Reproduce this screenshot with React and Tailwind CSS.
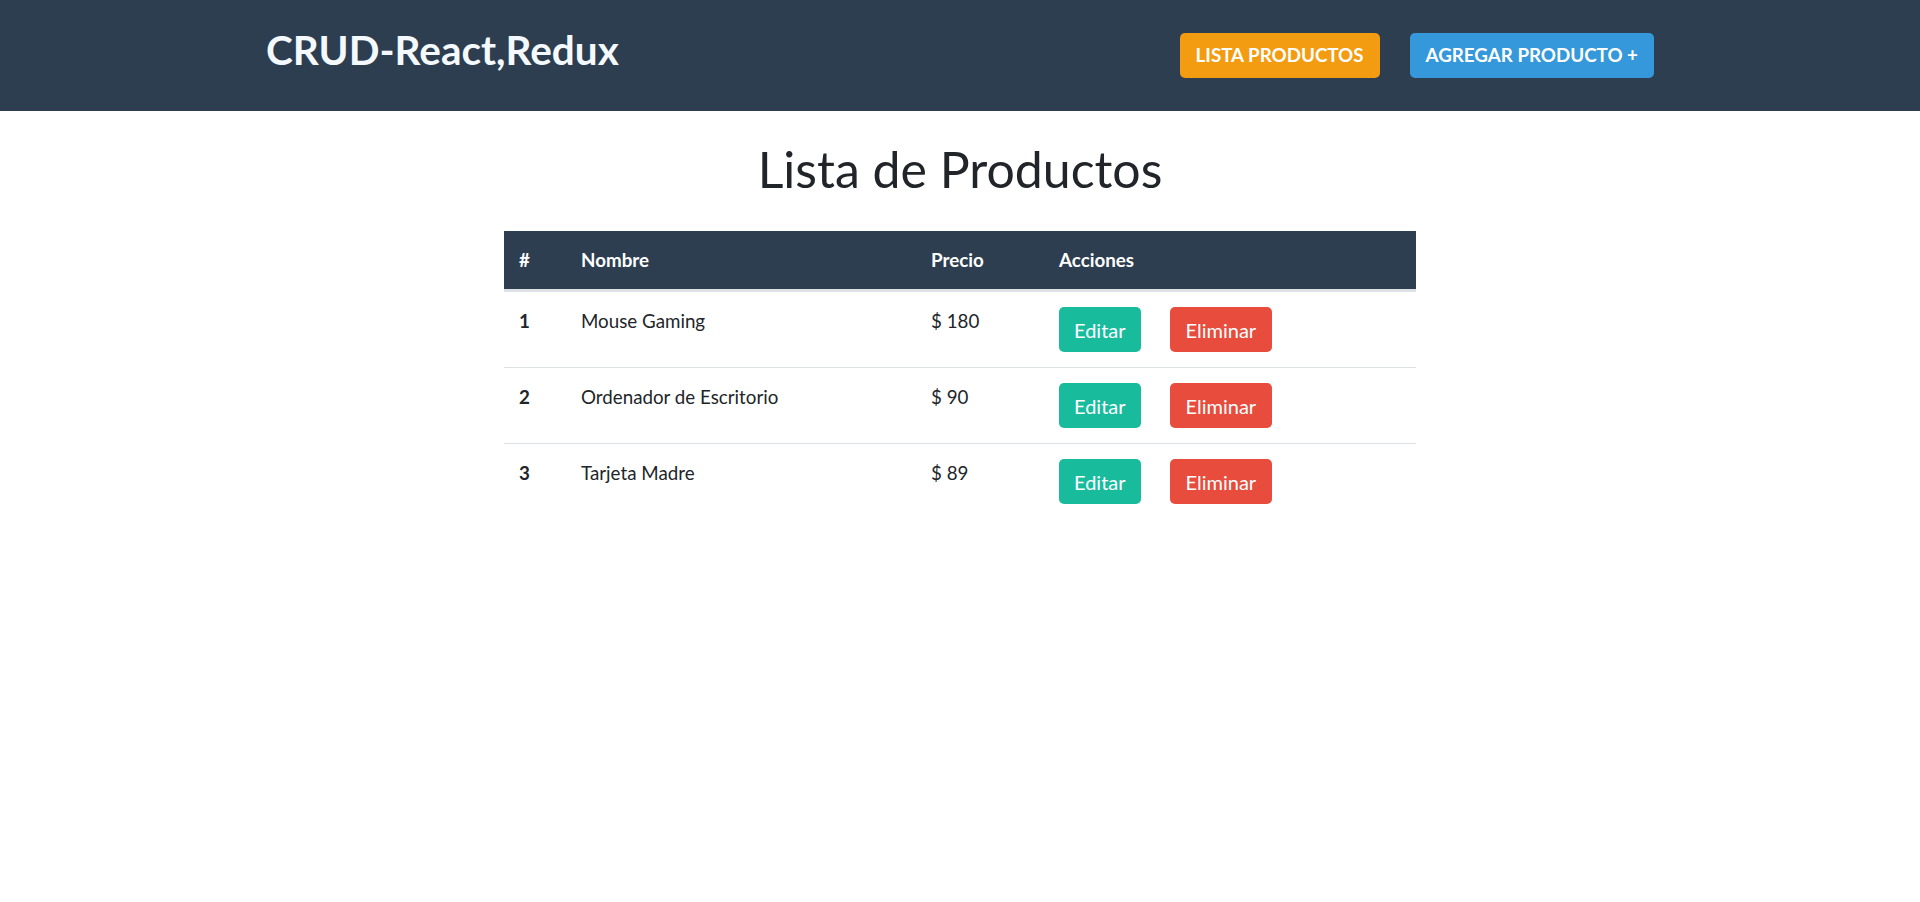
import React from "react";

const productos = [
  { id: 1, nombre: "Mouse Gaming", precio: 180 },
  { id: 2, nombre: "Ordenador de Escritorio", precio: 90 },
  { id: 3, nombre: "Tarjeta Madre", precio: 89 },
];

function Header() {
  return (
    <header className="bg-[#2c3e50] h-[111px] px-[266px] flex items-center justify-between">
      <h1 className="text-[40.5px] font-bold text-[#f4f9ff] leading-none mb-[11px]">CRUD-React,Redux</h1>
      <nav className="flex items-center gap-[30px]">
        <a className="h-[45px] px-[16px] flex items-center rounded-[5px] bg-[#f39c12] text-white font-bold uppercase text-[18.75px]">
          Lista Productos
        </a>
        <a className="h-[45px] px-[16px] flex items-center rounded-[5px] bg-[#3498db] text-white font-bold uppercase text-[18.75px]">
          Agregar Producto +
        </a>
      </nav>
    </header>
  );
}

function Fila({ producto }) {
  return (
    <div className="grid grid-cols-[62px_350px_128px_1fr] border-t border-[#dee2e6] first:border-t-0">
      <div className="p-[15px] leading-[28px] font-bold">{producto.id}</div>
      <div className="p-[15px] leading-[28px]">{producto.nombre}</div>
      <div className="p-[15px] leading-[28px]">$ {producto.precio}</div>
      <div className="p-[15px] flex gap-[29px]">
        <button className="h-[45px] px-[15px] rounded-[5px] bg-[#18bc9c] text-white text-[20px]">Editar</button>
        <button className="h-[45px] px-[16px] rounded-[5px] bg-[#e74c3c] text-white text-[20px]">Eliminar</button>
      </div>
    </div>
  );
}

export default function App() {
  return (
    <div className="min-h-screen bg-white text-[#212529] text-[18.75px] font-['Lato','Liberation_Sans',sans-serif]">
      <Header />
      <main className="w-[912px] mx-auto">
        <h2 className="text-center text-[50px] font-normal leading-[60px] mt-[28px] mb-[32px]">Lista de Productos</h2>
        <div>
          <div className="grid grid-cols-[62px_350px_128px_1fr] bg-[#2c3e50] text-white font-bold border-b-2 border-[#dee2e6]">
            <div className="p-[15px] leading-[28px]">#</div>
            <div className="p-[15px] leading-[28px]">Nombre</div>
            <div className="p-[15px] leading-[28px]">Precio</div>
            <div className="p-[15px] leading-[28px]">Acciones</div>
          </div>
          {productos.map((p) => (
            <Fila key={p.id} producto={p} />
          ))}
        </div>
      </main>
    </div>
  );
}
